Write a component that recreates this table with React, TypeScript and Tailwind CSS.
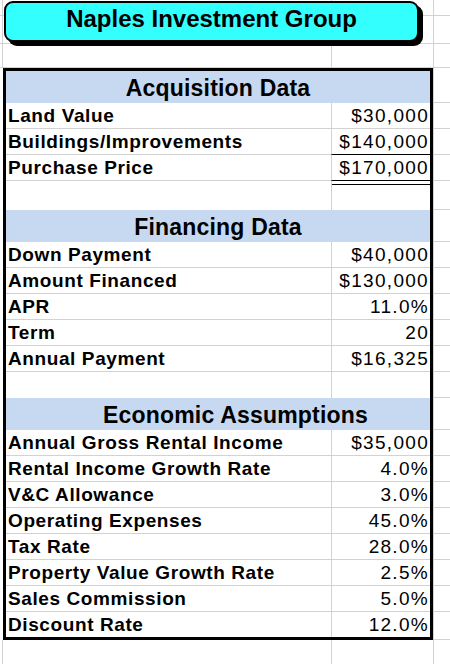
import React from "react";

type Item = { label: string; value: string };

const acquisition: Item[] = [
  { label: "Land Value", value: "$30,000" },
  { label: "Buildings/Improvements", value: "$140,000" },
  { label: "Purchase Price", value: "$170,000" },
];

const financing: Item[] = [
  { label: "Down Payment", value: "$40,000" },
  { label: "Amount Financed", value: "$130,000" },
  { label: "APR", value: "11.0%" },
  { label: "Term", value: "20" },
  { label: "Annual Payment", value: "$16,325" },
];

const economic: Item[] = [
  { label: "Annual Gross Rental Income", value: "$35,000" },
  { label: "Rental Income Growth Rate", value: "4.0%" },
  { label: "V&C Allowance", value: "3.0%" },
  { label: "Operating Expenses", value: "45.0%" },
  { label: "Tax Rate", value: "28.0%" },
  { label: "Property Value Growth Rate", value: "2.5%" },
  { label: "Sales Commission", value: "5.0%" },
  { label: "Discount Rate", value: "12.0%" },
];

// plain sheet row outside the black frame
function SheetRow({ h }: { h: string }) {
  return (
    <div className={`flex border-b border-[#d2d2d2] ${h}`}>
      <div className="w-[2px]" />
      <div className="w-[329px] border-l border-[#d2d2d2]" />
      <div className="w-[102px] border-l border-[#d2d2d2]" />
      <div className="flex-1 border-l border-[#d2d2d2]" />
    </div>
  );
}

// row inside the black frame, plus the spreadsheet cell to the right of it
function FrameRow({
  h,
  frame,
  children,
}: {
  h: string;
  frame: string;
  children?: React.ReactNode;
}) {
  return (
    <div className={`flex ${h}`}>
      <div className="w-[3px]" />
      <div className={`w-[430px] border-x-[3px] border-black ${frame}`}>
        {children}
      </div>
      <div className="flex-1 border-l border-b border-[#d2d2d2]" />
    </div>
  );
}

function Header({ title, shift }: { title: string; shift?: string }) {
  return (
    <div
      className={`h-full bg-[#c6d9f0] flex justify-center whitespace-nowrap text-[23px] font-bold leading-[34px] tracking-[0.2px] ${
        shift ?? ""
      }`}
    >
      {title}
    </div>
  );
}

function DataRow({
  item,
  last,
  valueBorder,
}: {
  item: Item;
  last?: boolean;
  valueBorder?: string;
}) {
  const line = last ? "" : "border-b border-[#d2d2d2]";
  return (
    <div className="flex h-full">
      <div
        className={`w-[325px] pl-[2px] text-[19px] font-bold leading-[26px] tracking-[0.6px] whitespace-nowrap ${line}`}
      >
        {item.label}
      </div>
      <div
        className={`flex-1 border-l border-l-[#d2d2d2] pr-[1px] text-right text-[19px] leading-[26px] tracking-[1.3px] ${
          valueBorder ?? line
        }`}
      >
        {item.value}
      </div>
    </div>
  );
}

function BlankRow({ doubleLine }: { doubleLine?: boolean }) {
  return (
    <div className="flex h-full">
      <div className="w-[325px]" />
      <div className="flex-1 border-l border-[#d2d2d2]">
        {doubleLine && <div className="mt-[3px] h-[1px] bg-black" />}
      </div>
    </div>
  );
}

export default function App() {
  return (
    <div className="relative w-[450px] h-[664px] overflow-hidden bg-white text-black font-['Liberation_Sans',Arial,sans-serif]">
      {/* sheet rows above the frame */}
      <SheetRow h="h-[16px]" />
      <SheetRow h="h-[28px]" />
      <SheetRow h="h-[24px]" />

      {/* Acquisition */}
      <FrameRow h="h-[35px]" frame="border-t-[3px]">
        <Header title="Acquisition Data" />
      </FrameRow>
      <FrameRow h="h-[26px]" frame="">
        <DataRow item={acquisition[0]} />
      </FrameRow>
      <FrameRow h="h-[26px]" frame="">
        <DataRow item={acquisition[1]} valueBorder="border-b border-b-black" />
      </FrameRow>
      <FrameRow h="h-[26px]" frame="">
        <DataRow item={acquisition[2]} valueBorder="border-b border-b-black" />
      </FrameRow>
      <FrameRow h="h-[29px]" frame="">
        <BlankRow doubleLine />
      </FrameRow>

      {/* Financing */}
      <FrameRow h="h-[32px]" frame="">
        <Header title="Financing Data" />
      </FrameRow>
      {financing.map((f) => (
        <FrameRow key={f.label} h="h-[26px]" frame="">
          <DataRow item={f} />
        </FrameRow>
      ))}
      <FrameRow h="h-[26px]" frame="">
        <BlankRow />
      </FrameRow>

      {/* Economic */}
      <FrameRow h="h-[32px]" frame="">
        <Header title="Economic Assumptions" shift="pl-[35px]" />
      </FrameRow>
      {economic.map((e, i) =>
        i === economic.length - 1 ? (
          <FrameRow key={e.label} h="h-[28px]" frame="border-b-[3px]">
            <DataRow item={e} last />
          </FrameRow>
        ) : (
          <FrameRow key={e.label} h="h-[26px]" frame="">
            <DataRow item={e} />
          </FrameRow>
        )
      )}

      <SheetRow h="h-[26px]" />

      {/* text box floating over the sheet */}
      <div className="absolute left-[4px] top-[1px] w-[415px] h-[41px] rounded-[9px] border-2 border-black bg-[#33ffff] shadow-[4px_4px_0_#000] flex justify-center pt-[4px] text-[24px] font-bold leading-[24px]">
        Naples Investment Group
      </div>
    </div>
  );
}
